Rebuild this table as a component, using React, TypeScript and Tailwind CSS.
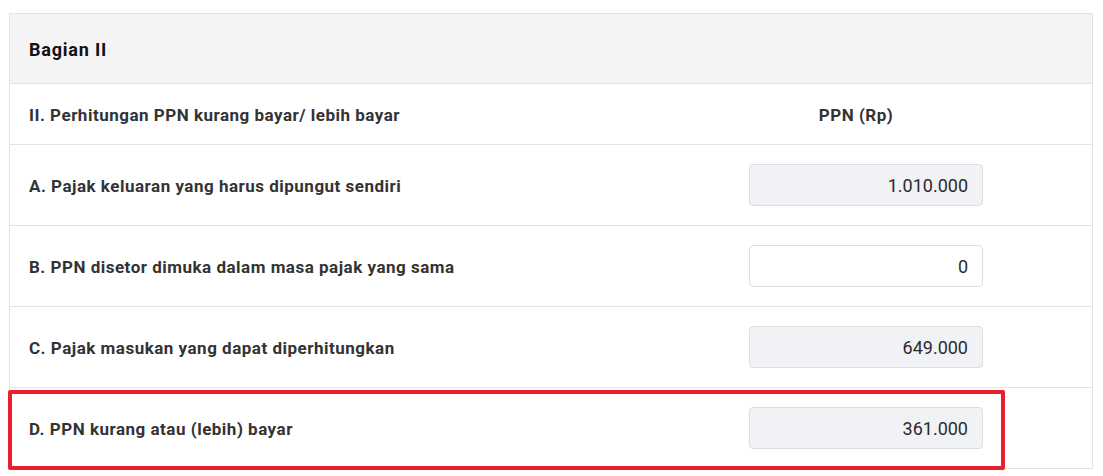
import React from 'react';

const rows = [
  { label: 'A. Pajak keluaran yang harus dipungut sendiri', value: '1.010.000', readOnly: true },
  { label: 'B. PPN disetor dimuka dalam masa pajak yang sama', value: '0', readOnly: false },
  { label: 'C. Pajak masukan yang dapat diperhitungkan', value: '649.000', readOnly: true },
  { label: 'D. PPN kurang atau (lebih) bayar', value: '361.000', readOnly: true },
];

export default function App() {
  return (
    <div className="min-h-screen bg-white pt-[13px] pl-[9px] pr-[10px] font-['Roboto',sans-serif]">
      <div className="relative border border-[#e3e3e3] border-b-0">
        {/* Header */}
        <div className="h-[70px] bg-[#f4f4f4] border-b border-[#e3e3e3] flex items-center pl-[19px] pt-[2px]">
          <span className="text-[18px] font-bold text-[#111] tracking-[0.8px]">Bagian II</span>
        </div>

        {/* Column headings */}
        <div className="h-[61px] border-b border-[#e3e3e3] flex items-center">
          <div className="flex-1 pl-[19px] pt-[3px] text-[17px] font-bold text-[#333] tracking-[0.5px]">
            II. Perhitungan PPN kurang bayar/ lebih bayar
          </div>
          <div className="w-[343px] pt-[3px]">
            <div className="w-[214px] text-center text-[17px] font-bold text-[#333] tracking-[0.5px]">PPN (Rp)</div>
          </div>
        </div>

        {rows.map((r) => (
          <div key={r.label} className="h-[81px] border-b border-[#e3e3e3] flex items-center">
            <div className="flex-1 pl-[19px] pt-[3px] text-[17px] font-bold text-[#333] tracking-[0.5px]">{r.label}</div>
            <div className="w-[343px]">
              <div
                className={
                  r.readOnly
                    ? 'w-[234px] h-[42px] rounded-[4px] border border-[#dedede] bg-[#f1f2f5] flex items-center justify-end pr-[14px] pt-[1px] text-[18px] text-[#2b2b2b]'
                    : 'w-[234px] h-[42px] rounded-[4px] border border-[#dedede] bg-white flex items-center justify-end pr-[14px] pt-[1px] text-[18px] text-[#2b2b2b]'
                }
              >
                {r.value}
              </div>
            </div>
          </div>
        ))}

        {/* Highlight */}
        <div className="absolute left-[-2px] top-[376px] w-[997px] h-[80px] border-[4px] border-[#e8202a] rounded-[2px]" />
      </div>
    </div>
  );
}
